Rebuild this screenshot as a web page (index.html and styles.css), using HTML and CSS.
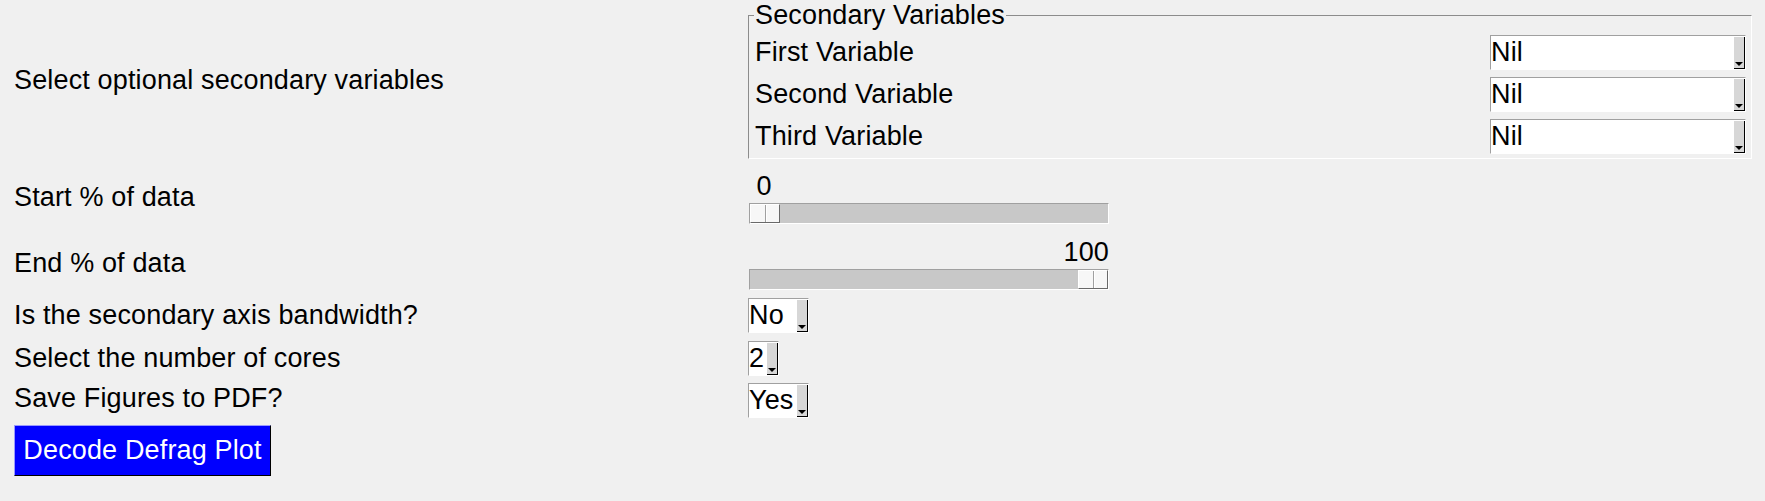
FILE: index.html
```html
<!DOCTYPE html>
<html>
<head>
<meta charset="utf-8">
<title>Decode Defrag Plot</title>
<link rel="stylesheet" href="styles.css">
</head>
<body>
<div class="form">
  <div class="label">Select optional secondary variables</div>
  <fieldset class="group">
    <legend>Secondary Variables</legend>
    <div class="group-grid">
      <span class="group-label">First Variable</span>
      <div class="combo wide"><span class="combo-text">Nil</span><span class="combo-arrow"></span></div>
      <span class="group-label">Second Variable</span>
      <div class="combo wide"><span class="combo-text">Nil</span><span class="combo-arrow"></span></div>
      <span class="group-label">Third Variable</span>
      <div class="combo wide"><span class="combo-text">Nil</span><span class="combo-arrow"></span></div>
    </div>
  </fieldset>

  <div class="label">Start % of data</div>
  <div class="scale">
    <div class="scale-value at-start">0</div>
    <div class="trough"><div class="thumb"></div></div>
  </div>

  <div class="label">End % of data</div>
  <div class="scale">
    <div class="scale-value at-end">100</div>
    <div class="trough at-end"><div class="thumb"></div></div>
  </div>

  <div class="label">Is the secondary axis bandwidth?</div>
  <div class="combo yesno"><span class="combo-text">No</span><span class="combo-arrow"></span></div>

  <div class="label">Select the number of cores</div>
  <div class="combo cores"><span class="combo-text">2</span><span class="combo-arrow"></span></div>

  <div class="label raised">Save Figures to PDF?</div>
  <div class="combo yesno"><span class="combo-text">Yes</span><span class="combo-arrow"></span></div>

  <button class="action">Decode Defrag Plot</button>
</div>
</body>
</html>
```

FILE: styles.css
```css
html, body {
  margin: 0;
  padding: 0;
  background: #f0f0f0;
}

body {
  font-family: "Liberation Sans", Arial, sans-serif;
  font-size: 27px;
  letter-spacing: 0.15px;
  color: #000;
  width: 1765px;
  height: 501px;
  overflow: hidden;
}

.form {
  display: grid;
  grid-template-columns: 734px 1004px;
  grid-template-rows: 160px 74px 58px 47px 39px 45px 54px;
  align-items: center;
  padding-left: 14px;
}

.label {
  line-height: 31px;
  white-space: nowrap;
}

.label.raised {
  margin-bottom: 5px;
}

/* Secondary variables group */
.group {
  align-self: start;
  box-sizing: border-box;
  width: 1004px;
  min-width: 0;
  margin: 0;
  padding: 4px 5px 4px 6px;
  border: 1px solid;
  border-color: #8c8c8c #ffffff #ffffff #8c8c8c;
}

.group legend {
  padding: 0 1px;
  margin-left: -1px;
  line-height: 31px;
  font-size: 27px;
}

.group-grid {
  display: grid;
  grid-template-columns: 1fr 256px;
  grid-auto-rows: 35px;
  row-gap: 7px;
  align-items: center;
}

.group-label {
  line-height: 31px;
  white-space: nowrap;
}

/* Option menus */
.combo {
  display: flex;
  box-sizing: border-box;
  height: 35px;
  background: #fff;
  border: 1px solid;
  border-color: #a0a0a0 #ffffff #ffffff #a0a0a0;
}

.combo.wide { width: 256px; }
.combo.yesno { width: 61px; }
.combo.cores { width: 31px; }

.combo-text {
  flex: 1;
  line-height: 33px;
  white-space: nowrap;
  overflow: hidden;
}

.combo-arrow {
  position: relative;
  box-sizing: border-box;
  width: 11px;
  margin-top: 1px;
  background: #d7d7d7;
  border-right: 1px solid #000;
  border-bottom: 1px solid #000;
}

.combo-arrow::after {
  content: "";
  position: absolute;
  left: 1px;
  bottom: 2px;
  width: 0;
  height: 0;
  border-left: 4px solid transparent;
  border-right: 4px solid transparent;
  border-top: 4px solid #000;
}

/* Scales */
.scale {
  width: 360px;
  margin-left: 1px;
}

.scale-value {
  height: 33px;
  line-height: 33px;
}

.scale-value.at-start {
  width: 30px;
  text-align: center;
}

.scale-value.at-end {
  text-align: right;
}

.trough {
  display: flex;
  box-sizing: border-box;
  height: 21px;
  background: #c8c8c8;
  border: 1px solid;
  border-color: #a0a0a0 #ffffff #ffffff #a0a0a0;
}

.trough.at-end {
  justify-content: flex-end;
}

.thumb {
  position: relative;
  box-sizing: border-box;
  width: 30px;
  height: 19px;
  background: #f7f7f7;
  border: 1px solid;
  border-color: #ffffff #696969 #696969 #ffffff;
}

.thumb::after {
  content: "";
  position: absolute;
  top: 0;
  bottom: 0;
  left: 14px;
  width: 1px;
  background: #a0a0a0;
  box-shadow: 1px 0 0 #ffffff;
}

/* Action button */
.action {
  justify-self: start;
  box-sizing: border-box;
  width: 257px;
  height: 51px;
  margin: 0;
  padding: 0;
  background: #0000ff;
  color: #fff;
  font-family: "Liberation Sans", Arial, sans-serif;
  font-size: 27px;
  letter-spacing: 0.15px;
  line-height: 49px;
  border: 1px solid;
  border-color: #9a9aff #000000 #000000 #9a9aff;
}
```
